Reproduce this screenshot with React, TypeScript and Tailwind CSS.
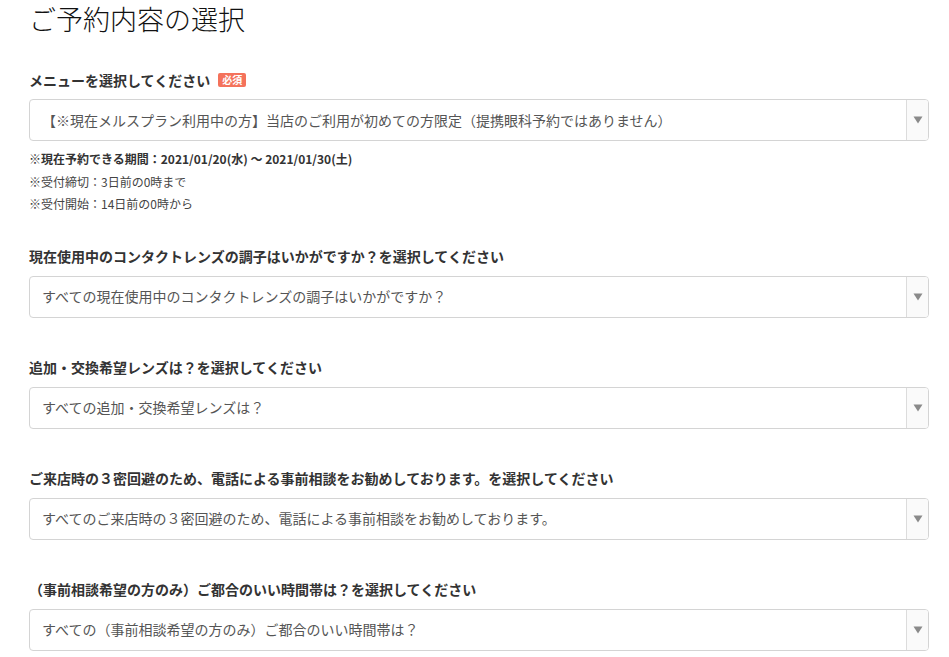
import { ReactNode } from 'react';

const font = { fontFamily: '"Noto Sans CJK JP", "Noto Sans", sans-serif' };

interface SelectBoxProps {
  value: string;
}

function SelectBox({ value }: SelectBoxProps) {
  return (
    <div className="flex h-[42px] w-[900px] rounded-[4px] border border-[#d4d4d4] bg-white overflow-hidden">
      <div className="flex flex-1 items-center px-3 text-[14px] text-[#555] whitespace-nowrap">
        {value}
      </div>
      <div className="flex w-[22px] items-center justify-center border-l border-[#dcdcdc] bg-[#fafafa]">
        <svg width="10" height="8" viewBox="0 0 10 8">
          <path d="M0.5 0.5 H9.5 L5 7.5 Z" fill="#8a8a8a" />
        </svg>
      </div>
    </div>
  );
}

interface FieldProps {
  label: string;
  required?: boolean;
  value: string;
  children?: ReactNode;
}

function Field({ label, required, value, children }: FieldProps) {
  return (
    <div className="flex flex-col">
      <div className="flex h-[20px] items-center gap-2">
        <span className="text-[14px] font-bold text-[#333]">{label}</span>
        {required && (
          <span className="flex h-[14px] items-center rounded-[2px] bg-[#f4725b] px-[4px] text-[10px] font-bold leading-none text-white">
            必須
          </span>
        )}
      </div>
      <div className="mt-[9px]">
        <SelectBox value={value} />
      </div>
      {children}
    </div>
  );
}

export default function App() {
  return (
    <div className="min-h-screen bg-white pl-[29px]" style={font}>
      <h1 className="pt-[2px] text-[27px] font-light leading-[34px] text-[#111]">ご予約内容の選択</h1>

      <div className="mt-[34px] flex flex-col gap-[40px]">
        <Field
          label="メニューを選択してください"
          required
          value="【※現在メルスプラン利用中の方】当店のご利用が初めての方限定（提携眼科予約ではありません）"
        >
          {/* notes sit a bit closer to the next field */}
          <div className="mt-[7px] -mb-[9px] flex flex-col text-[12px] leading-[22.5px] text-[#444]">
            <span className="font-bold text-[#333]">※現在予約できる期間：2021/01/20(水) ～ 2021/01/30(土)</span>
            <span>※受付締切：3日前の0時まで</span>
            <span>※受付開始：14日前の0時から</span>
          </div>
        </Field>

        <Field
          label="現在使用中のコンタクトレンズの調子はいかがですか？を選択してください"
          value="すべての現在使用中のコンタクトレンズの調子はいかがですか？"
        />

        <Field
          label="追加・交換希望レンズは？を選択してください"
          value="すべての追加・交換希望レンズは？"
        />

        <Field
          label="ご来店時の３密回避のため、電話による事前相談をお勧めしております。を選択してください"
          value="すべてのご来店時の３密回避のため、電話による事前相談をお勧めしております。"
        />

        <Field
          label="（事前相談希望の方のみ）ご都合のいい時間帯は？を選択してください"
          value="すべての（事前相談希望の方のみ）ご都合のいい時間帯は？"
        />
      </div>
    </div>
  );
}
